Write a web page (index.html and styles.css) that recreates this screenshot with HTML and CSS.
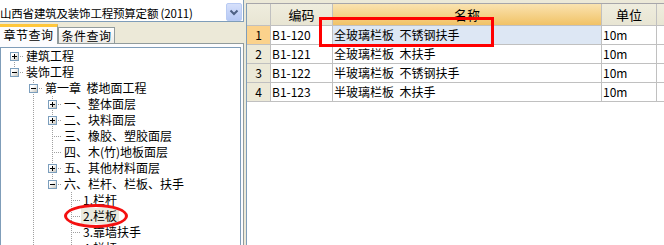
FILE: index.html
```html
<!DOCTYPE html>
<html lang="zh">
<head>
<meta charset="utf-8">
<title>定额查询</title>
<link rel="stylesheet" href="styles.css">
</head>
<body>
<div class="app">
  <div class="left">
    <div class="combo">
      <span class="combo-text">山西省建筑及装饰工程预算定额 (2011)</span>
      <span class="combo-btn"><svg width="14" height="16" viewBox="0 0 14 16"><path d="M3.5 6.5 L7 10 L10.5 6.5" fill="none" stroke="#4d6185" stroke-width="2"/></svg></span>
    </div>
    <div class="tabs">
      <div class="tab active">章节查询</div>
      <div class="tab">条件查询</div>
    </div>
    <div class="tabpanel">
      <div class="tree">
        <div class="row"><span class="ind conn b"><span class="exp plus"></span></span><span class="label">建筑工程</span></div>
        <div class="row"><span class="ind conn t"><span class="exp minus"></span></span><span class="label">装饰工程</span></div>
        <div class="row"><span class="ind"></span><span class="ind conn tb"><span class="exp minus"></span></span><span class="label">第一章&nbsp;&nbsp;楼地面工程</span></div>
        <div class="row"><span class="ind"></span><span class="ind v"></span><span class="ind conn tb"><span class="exp plus"></span></span><span class="label">一、整体面层</span></div>
        <div class="row"><span class="ind"></span><span class="ind v"></span><span class="ind conn tb"><span class="exp plus"></span></span><span class="label">二、块料面层</span></div>
        <div class="row"><span class="ind"></span><span class="ind v"></span><span class="ind conn tb"></span><span class="label">三、橡胶、塑胶面层</span></div>
        <div class="row"><span class="ind"></span><span class="ind v"></span><span class="ind conn tb"></span><span class="label">四、木(竹)地板面层</span></div>
        <div class="row"><span class="ind"></span><span class="ind v"></span><span class="ind conn tb"><span class="exp plus"></span></span><span class="label">五、其他材料面层</span></div>
        <div class="row"><span class="ind"></span><span class="ind v"></span><span class="ind conn t"><span class="exp minus"></span></span><span class="label">六、栏杆、栏板、扶手</span></div>
        <div class="row"><span class="ind"></span><span class="ind v"></span><span class="ind"></span><span class="ind conn tb"></span><span class="label">1.栏杆</span></div>
        <div class="row"><span class="ind"></span><span class="ind v"></span><span class="ind"></span><span class="ind conn tb"></span><span class="label selected">2.栏板</span></div>
        <div class="row"><span class="ind"></span><span class="ind v"></span><span class="ind"></span><span class="ind conn tb"></span><span class="label">3.靠墙扶手</span></div>
        <div class="row"><span class="ind"></span><span class="ind v"></span><span class="ind"></span><span class="ind conn tb"></span><span class="label">4.栏杆</span></div>
      </div>
    </div>
  </div>
  <div class="right">
    <div class="grid">
      <div class="hd corner"></div>
      <div class="hd">编码</div>
      <div class="hd hd-sel">名称</div>
      <div class="hd">单位</div>
      <div class="hd fill"></div>

      <div class="rh rh-sel">1</div>
      <div class="cell">B1-120</div>
      <div class="cell cell-sel">全玻璃栏板&nbsp;&nbsp;不锈钢扶手</div>
      <div class="cell">10m</div>
      <div class="cell fill"></div>

      <div class="rh">2</div>
      <div class="cell">B1-121</div>
      <div class="cell">全玻璃栏板&nbsp;&nbsp;木扶手</div>
      <div class="cell">10m</div>
      <div class="cell fill"></div>

      <div class="rh">3</div>
      <div class="cell">B1-122</div>
      <div class="cell">半玻璃栏板&nbsp;&nbsp;不锈钢扶手</div>
      <div class="cell">10m</div>
      <div class="cell fill"></div>

      <div class="rh">4</div>
      <div class="cell">B1-123</div>
      <div class="cell">半玻璃栏板&nbsp;&nbsp;木扶手</div>
      <div class="cell">10m</div>
      <div class="cell fill"></div>
    </div>
  </div>
  <div class="mark-rect"></div>
  <div class="mark-ellipse"></div>
</div>
</body>
</html>
```

FILE: styles.css
```css
:root {
  --dotv: repeating-linear-gradient(to bottom, #a0a0a0 0 1px, transparent 1px 2px);
  --doth: repeating-linear-gradient(to right, #a0a0a0 0 1px, transparent 1px 2px);
}

* { box-sizing: border-box; }

body {
  margin: 0;
  width: 664px;
  height: 245px;
  overflow: hidden;
  background: #ece9d8;
  font: 12px/16px "Noto Sans CJK SC", "Liberation Sans", sans-serif;
  color: #000;
}

.app {
  position: relative;
  display: flex;
  height: 245px;
}

/* ---------- left panel ---------- */
.left {
  width: 246px;
  flex: none;
  display: flex;
  flex-direction: column;
}

.combo {
  margin: -1px 0 0 -1px;
  width: 245px;
  height: 24px;
  border: 1px solid #7f9db9;
  background: #fff;
  display: flex;
  align-items: flex-start;
  justify-content: space-between;
  padding-right: 1px;
}

.combo-text {
  margin-top: 5px;
  font-size: 11.5px;
  line-height: 16px;
  letter-spacing: -0.2px;
  white-space: pre;
}

.combo-btn {
  margin-top: 3px;
  width: 16px;
  height: 18px;
  border: 1px solid #b9cbf3;
  border-radius: 2px;
  background: linear-gradient(#d6e0fb, #b6c9f5);
  display: flex;
  align-items: center;
  justify-content: center;
}

.tabs {
  margin-top: 2px;
  height: 19px;
  display: flex;
  align-items: flex-end;
}

.tab {
  height: 16px;
  width: 57px;
  border: 1px solid #919b9c;
  border-bottom: none;
  background: linear-gradient(#ffffff, #ecebe6);
  text-align: center;
  line-height: 15px;
  letter-spacing: 0.5px;
  white-space: nowrap;
}

.tab.active {
  position: relative;
  z-index: 1;
  margin-left: -1px;
  margin-bottom: -1px;
  width: 59px;
  height: 20px;
  border-top: 3px solid #ffc73c;
  background: #fcfcfe;
  line-height: 16px;
}

.tabpanel {
  flex: 1;
  margin-left: -1px;
  width: 245px;
  border: 1px solid #919b9c;
  border-bottom: none;
  background: #fcfcfe;
  padding: 3px 2px 0 0;
  display: flex;
  flex-direction: column;
}

.tree {
  flex: 1;
  border: 1px solid #7f9db9;
  border-bottom: none;
  background: #fff;
  padding: 0 0 0 4px;
  overflow: hidden;
}

.row {
  height: 16px;
  display: flex;
  align-items: center;
  white-space: nowrap;
}

.ind {
  width: 19px;
  height: 16px;
  flex: none;
  display: flex;
  align-items: center;
}

.ind.v {
  background: var(--dotv) 9px 0 / 1px 16px no-repeat;
}

.conn.tb {
  background:
    var(--dotv) 9px 0 / 1px 16px no-repeat,
    var(--doth) 11px 8px / 8px 1px no-repeat;
}

.conn.t {
  background:
    var(--dotv) 9px 0 / 1px 9px no-repeat,
    var(--doth) 11px 8px / 8px 1px no-repeat;
}

.conn.b {
  background:
    var(--dotv) 9px 8px / 1px 8px no-repeat,
    var(--doth) 11px 8px / 8px 1px no-repeat;
}

.exp {
  width: 9px;
  height: 9px;
  margin: 1px 0 0 5px;
  border: 1px solid #7b9ebd;
  background:
    linear-gradient(#000, #000) 1px 3px / 5px 1px no-repeat,
    linear-gradient(135deg, #ffffff 30%, #c8c6bd);
}

.exp.plus {
  background:
    linear-gradient(#000, #000) 1px 3px / 5px 1px no-repeat,
    linear-gradient(#000, #000) 3px 1px / 1px 5px no-repeat,
    linear-gradient(135deg, #ffffff 30%, #c8c6bd);
}

.label {
  padding: 0 2px;
  line-height: 16px;
  height: 16px;
}

.label.selected {
  background: #ebeadf;
}

/* ---------- right panel ---------- */
.right {
  flex: 1;
  margin-top: 3px;
  border-top: 1px solid #a7a6aa;
  border-left: 1px solid #7f9db9;
  background: #fff;
}

.grid {
  display: grid;
  grid-template-columns: 24px 62px 269px 55px 1fr;
  grid-template-rows: 22px repeat(4, 19px);
}

.grid > div {
  border-right: 1px solid #c0c0c0;
  border-bottom: 1px solid #c0c0c0;
  white-space: nowrap;
  overflow: hidden;
}

.hd {
  background: linear-gradient(#efedde, #e8e5d3);
  text-align: center;
  line-height: 21px;
  font-size: 13px;
}

.hd.hd-sel {
  background: linear-gradient(#fae3b0, #f1c266);
}

.rh {
  background: #ece9d8;
  text-align: center;
  line-height: 18px;
}

.rh.rh-sel {
  background: #fbd28c;
}

.cell {
  padding-left: 1px;
  line-height: 18px;
}

.cell.cell-sel {
  background: #dde7f4;
}

.fill {
  border-right: none !important;
}

/* ---------- annotations ---------- */
.mark-rect {
  position: absolute;
  left: 319px;
  top: 17px;
  width: 175px;
  height: 30px;
  border: 3px solid #f00;
}

.mark-ellipse {
  position: absolute;
  left: 64px;
  top: 204px;
  width: 64px;
  height: 24px;
  border: 3px solid #f41010;
  border-radius: 50%;
}
```
